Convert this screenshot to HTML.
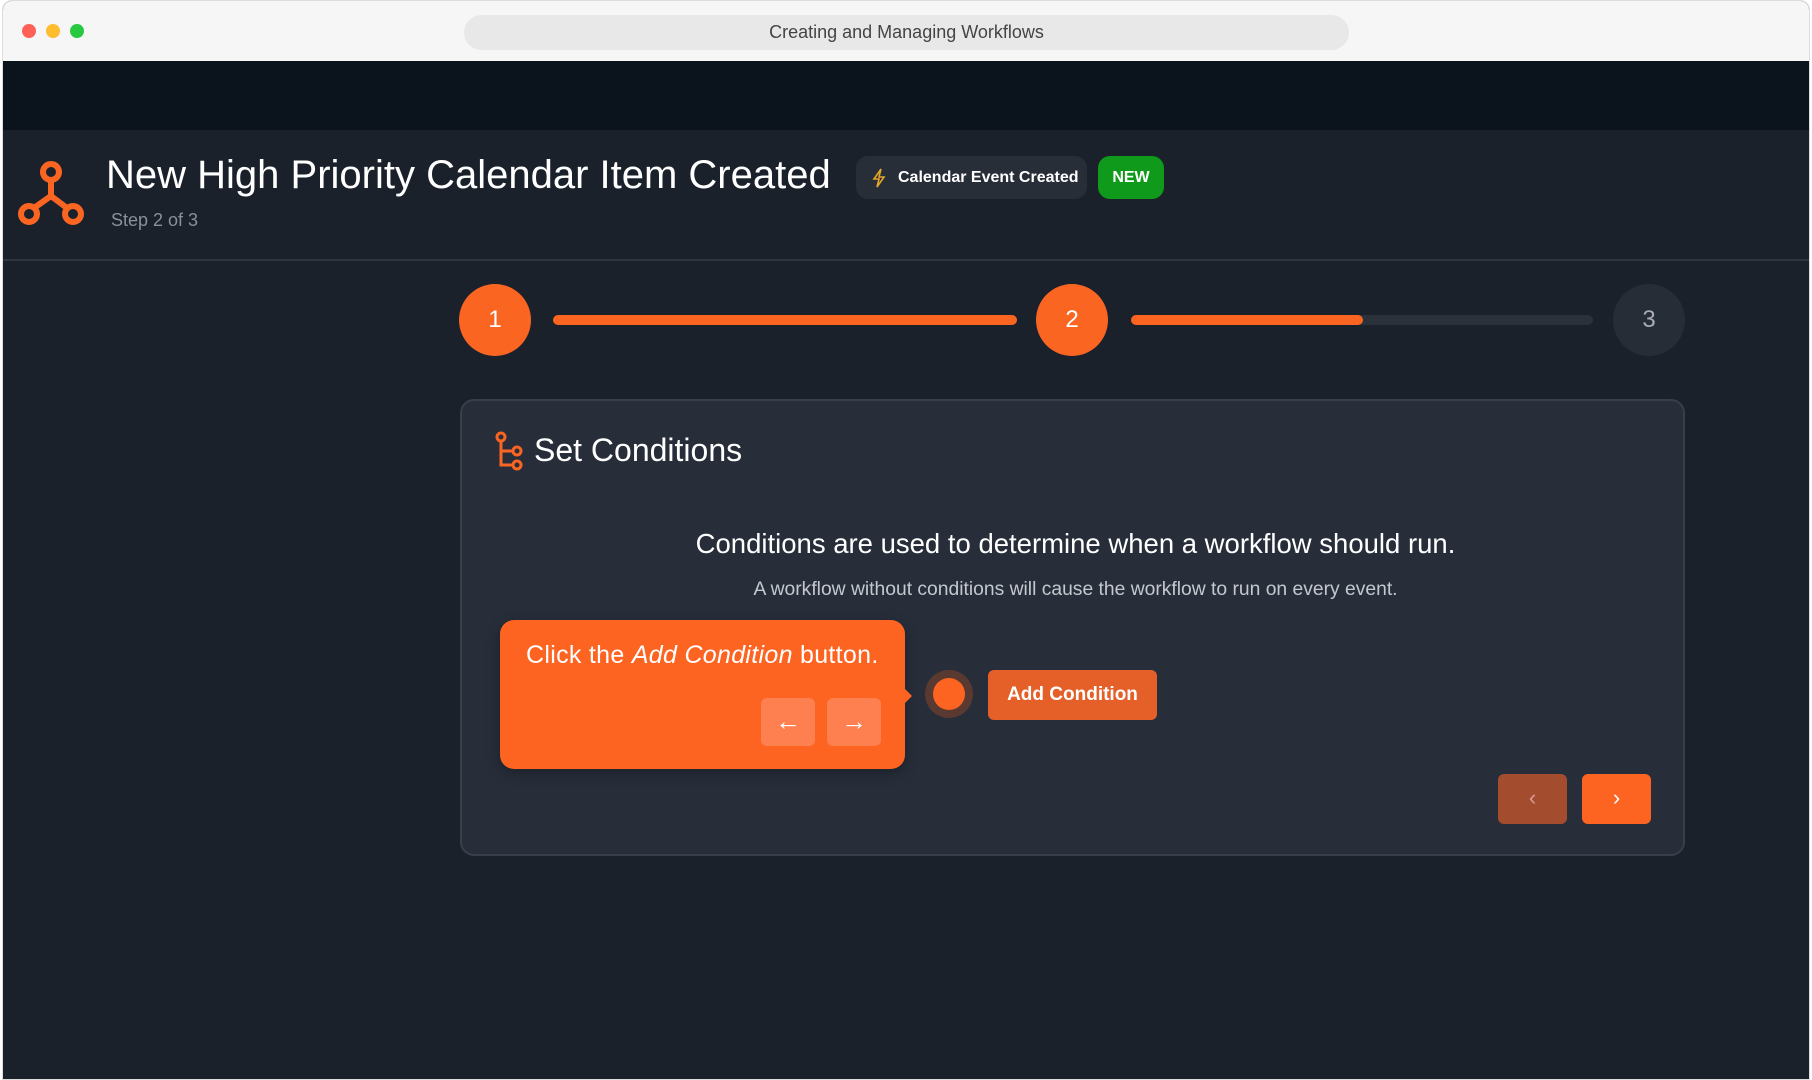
<!DOCTYPE html><html><head><meta charset="utf-8"><style>
*{box-sizing:border-box;margin:0;padding:0}
body{width:1812px;height:1080px;background:#fff;font-family:"Liberation Sans",sans-serif;overflow:hidden;position:relative}
.win{position:absolute;left:2px;top:0;width:1808px;height:1080px;background:#1a212b;border-radius:10px 10px 0 0;overflow:hidden;border:1px solid #ddd}
.tb{position:absolute;left:0;top:0;right:0;height:60px;background:#f6f6f6}
.dot{position:absolute;top:23px;width:14px;height:14px;border-radius:50%}
.pill{position:absolute;left:461px;top:14px;width:885px;height:35px;background:#e8e8e8;border-radius:18px;text-align:center;line-height:35px;font-size:18px;color:#444}
.band{position:absolute;left:0;top:60px;right:0;height:69px;background:#0b131d}
.hdr{position:absolute;left:0;top:129px;right:0;height:131px;border-bottom:2px solid #2f363f}
.abs{position:absolute}
.c{position:absolute;width:72px;height:72px;border-radius:50%;text-align:center;line-height:72px;font-size:24px;color:#fff}
.bar{position:absolute;height:10px;border-radius:5px;top:314px}
.card{position:absolute;left:457px;top:398px;width:1225px;height:457px;background:#272e3a;border:2px solid #383f4a;border-radius:14px}
.btn{position:absolute;border-radius:6px}
</style></head><body><div class="win">
<div class="tb"><div class="dot" style="left:19px;background:#fe5f57"></div><div class="dot" style="left:43px;background:#febc2e"></div><div class="dot" style="left:67px;background:#28c840"></div><div class="pill">Creating and Managing Workflows</div></div>
<div class="band"></div>
<div class="hdr">
<svg class="abs" style="left:15px;top:31px" width="66" height="68" viewBox="0 0 66 68"><g fill="none" stroke="#fb6522" stroke-width="6"><circle cx="33" cy="11" r="8"/><circle cx="11" cy="53" r="8"/><circle cx="55" cy="53" r="8"/><path d="M33 19v16L16 47M33 35l16 12"/></g></svg>
<div class="abs" style="left:103px;top:23px;font-size:40px;color:#fff">New High Priority Calendar Item Created</div>
<div class="abs" style="left:108px;top:80px;font-size:18px;color:#8a9099">Step 2 of 3</div>
<div class="abs" style="left:853px;top:26px;width:231px;height:43px;background:#272e38;border-radius:12px;font-size:16px;font-weight:bold;color:#fff;line-height:43px;padding-left:42px">Calendar Event Created</div>
<svg class="abs" style="left:868px;top:38px" width="16" height="20" viewBox="0 0 16 20"><path d="M10 1L3 11h5l-2 8 7-10H8z" fill="none" stroke="#e3a52a" stroke-width="1.6"/></svg>
<div class="abs" style="left:1095px;top:26px;width:66px;height:43px;background:#0f9a1b;border-radius:12px;font-size:16px;font-weight:bold;color:#fff;text-align:center;line-height:43px">NEW</div>
</div>
<div class="c" style="left:456px;top:283px;background:#fb6522">1</div>
<div class="bar" style="left:550px;width:464px;background:#fb6522"></div>
<div class="c" style="left:1033px;top:283px;background:#fb6522">2</div>
<div class="bar" style="left:1128px;width:462px;background:#2a313b"></div>
<div class="bar" style="left:1128px;width:232px;background:#fb6522"></div>
<div class="c" style="left:1610px;top:283px;background:#262d37;color:#aab">3</div>
<div class="card">
<svg class="abs" style="left:32px;top:30px" width="30" height="40" viewBox="0 0 30 40"><g fill="none" stroke="#fb6522" stroke-width="3"><circle cx="7" cy="6" r="4"/><circle cx="23" cy="20" r="4"/><circle cx="23" cy="34" r="4"/><path d="M7 10v24h12M7 20h12"/></g></svg>
<div class="abs" style="left:72px;top:31px;font-size:32px;color:#fff">Set Conditions</div>
<div class="abs" style="left:0;width:1221px;text-align:center;top:127px;font-size:27.5px;color:#fff;padding-left:6px">Conditions are used to determine when a workflow should run.</div>
<div class="abs" style="left:0;width:1221px;text-align:center;top:178px;font-size:19.3px;color:#c4c8ce;padding-left:6px">A workflow without conditions will cause the workflow to run on every event.</div>
<div class="abs" style="left:38px;top:219px;width:405px;height:149px;background:#fd6421;border-radius:14px;box-shadow:0 4px 14px rgba(0,0,0,.3)"></div>
<div class="abs" style="left:441px;top:286px;width:0;height:0;border-top:9px solid transparent;border-bottom:9px solid transparent;border-left:9px solid #fd6421"></div>
<div class="abs" style="left:64px;top:240px;font-size:25px;color:#fff;letter-spacing:.3px">Click the <i>Add Condition</i> button.</div>
<div class="btn" style="left:299px;top:297px;width:54px;height:48px;background:#fe8050;color:#fff;font-size:26px;text-align:center;line-height:46px">←</div>
<div class="btn" style="left:365px;top:297px;width:54px;height:48px;background:#fe8050;color:#fff;font-size:26px;text-align:center;line-height:46px">→</div>
<div class="abs" style="left:463px;top:269px;width:48px;height:48px;border-radius:50%;background:#5a3a30"></div>
<div class="abs" style="left:471px;top:277px;width:32px;height:32px;border-radius:50%;background:#fd6421"></div>
<div class="btn" style="left:526px;top:269px;width:169px;height:50px;background:#e55f29;color:#fff;font-size:19px;font-weight:bold;text-align:center;line-height:50px">Add Condition</div>
<div class="btn" style="left:1036px;top:373px;width:69px;height:50px;background:#a44d2e;color:#d99;font-size:22px;text-align:center;line-height:48px">‹</div>
<div class="btn" style="left:1120px;top:373px;width:69px;height:50px;background:#fd6421;color:#fff;font-size:22px;text-align:center;line-height:48px">›</div>
</div>
</div></body></html>
